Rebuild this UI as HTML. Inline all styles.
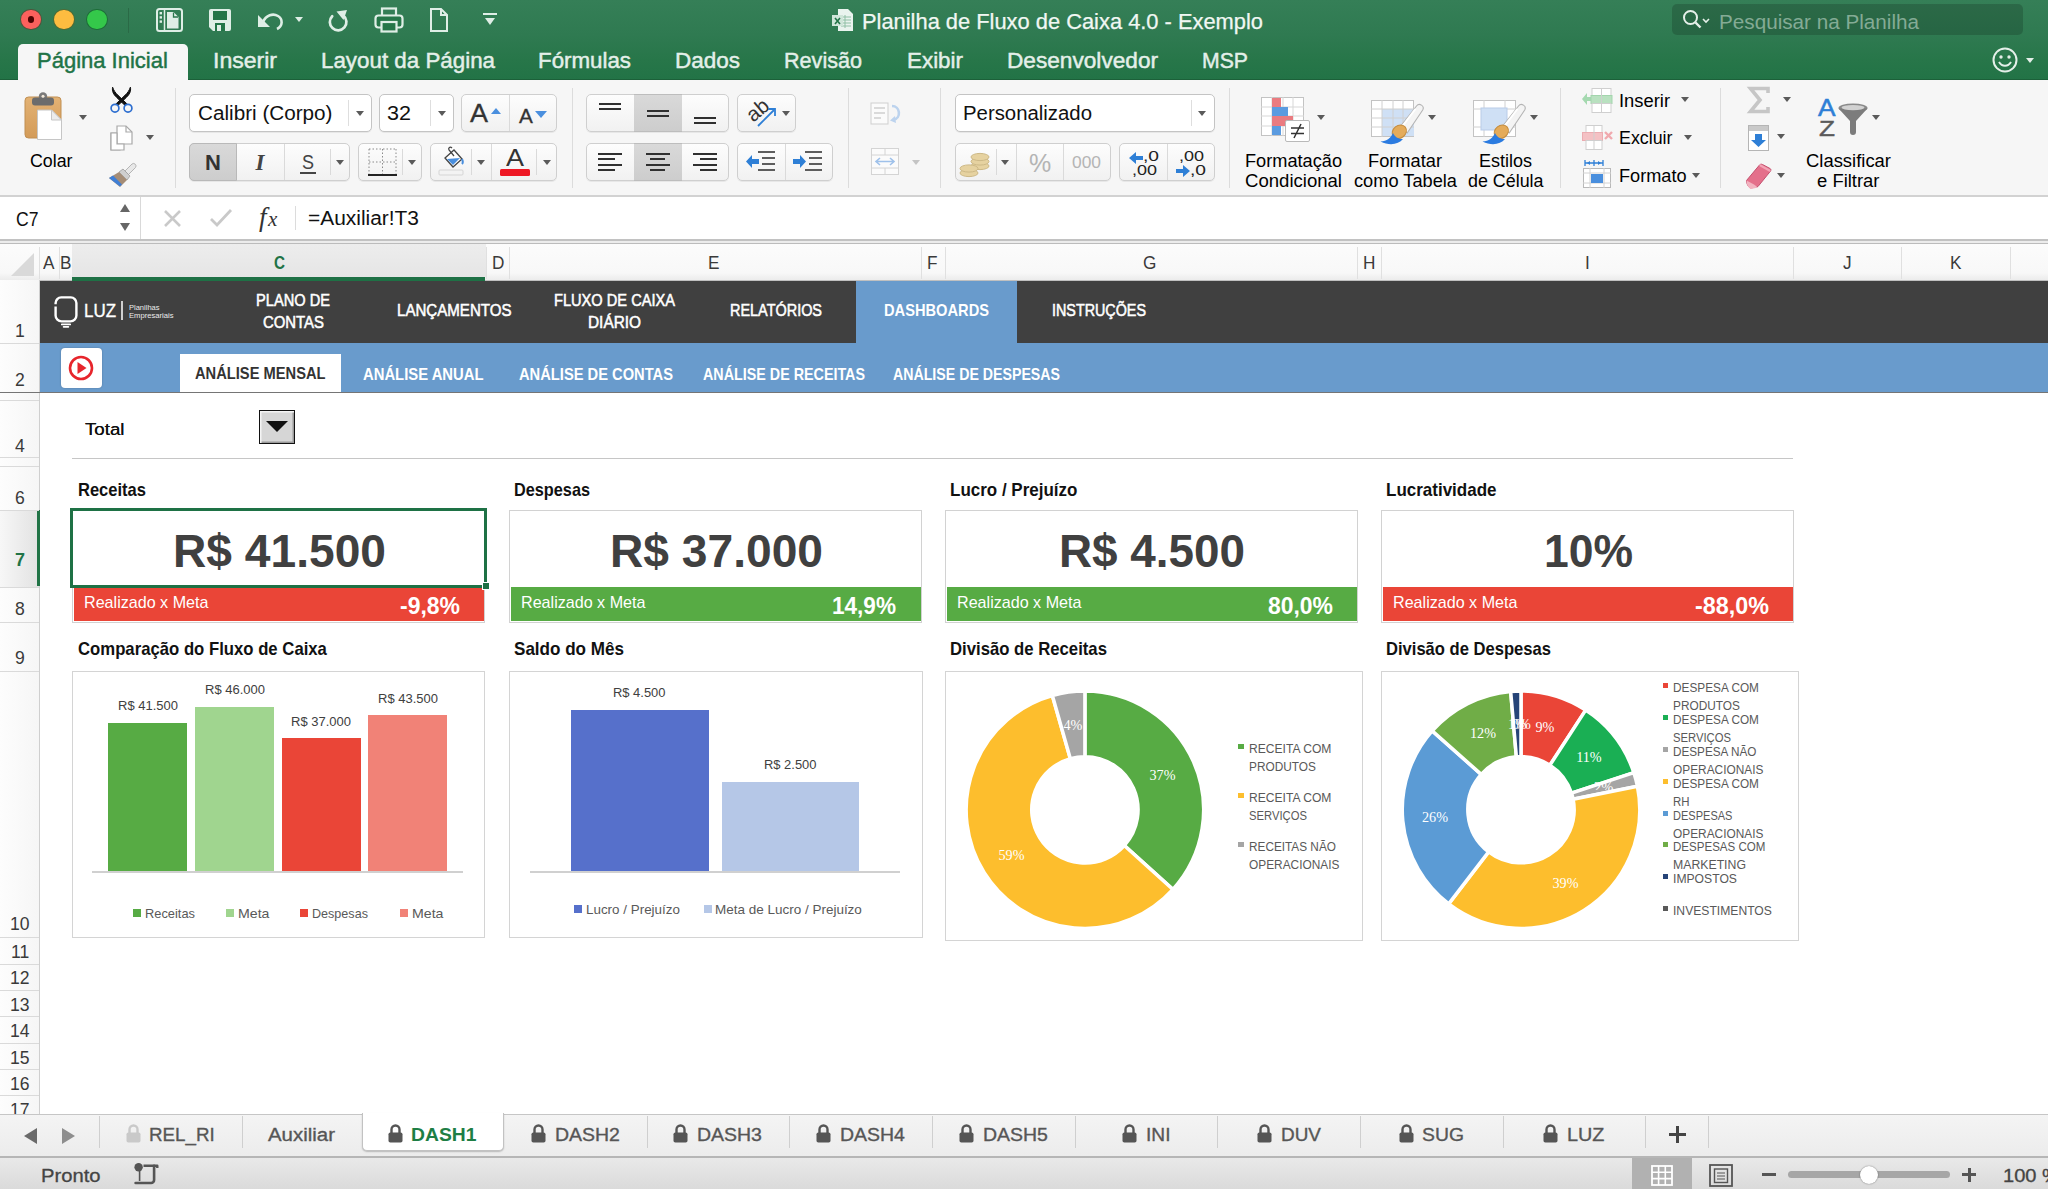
<!DOCTYPE html>
<html><head><meta charset="utf-8"><title>Planilha de Fluxo de Caixa 4.0 - Exemplo</title>
<style>
html,body{margin:0;padding:0;}
body{width:2048px;height:1189px;position:relative;overflow:hidden;background:#fff;font-family:"Liberation Sans",sans-serif;}
.a{position:absolute;box-sizing:border-box;}
.t{position:absolute;white-space:nowrap;transform-origin:0 50%;}
svg{position:absolute;overflow:visible;}
.btn{position:absolute;box-sizing:border-box;background:linear-gradient(#fdfdfd,#f1f1f1);border:1px solid #cfcfcf;border-radius:5px;box-shadow:0 1px 0 rgba(0,0,0,.06);}
.sel{position:absolute;box-sizing:border-box;background:linear-gradient(#d9d9d9,#cdcdcd);}
.vd{position:absolute;width:1px;background:#d8d8d8;}
.sep{position:absolute;width:1px;background:#dcdcdc;top:88px;height:100px;}
</style></head><body>

<div class="a" style="left:0px;top:0px;width:2048px;height:80px;background:linear-gradient(#357f57 0px,#2f7a51 35px,#277649 60px,#227346 80px);"></div>
<div class="a" style="left:0px;top:79px;width:2048px;height:1px;background:#1c6039;"></div>
<div class="a" style="left:20.4px;top:9px;width:21.2px;height:21.2px;border-radius:50%;background:#fc615d;border:1px solid rgba(20,80,50,.75);"></div>
<div class="a" style="left:53.4px;top:9px;width:21.2px;height:21.2px;border-radius:50%;background:#fdbc40;border:1px solid rgba(20,80,50,.75);"></div>
<div class="a" style="left:86.4px;top:9px;width:21.2px;height:21.2px;border-radius:50%;background:#34c84a;border:1px solid rgba(20,80,50,.75);"></div>
<div class="a" style="left:27.8px;top:16.4px;width:6.4px;height:6.4px;border-radius:50%;background:#4f0403;"></div>
<div class="a" style="left:128px;top:8px;width:1px;height:25px;background:#2a6a46;"></div>
<svg class="a" style="left:156px;top:8px" width="27" height="24" viewBox="0 0 27 24"><rect x="1" y="1" width="25" height="22" rx="2.5" fill="none" stroke="#dfeee6" stroke-width="2"/><path d="M8.5 1v22" stroke="#dfeee6" stroke-width="1.5"/><rect x="3.6" y="4" width="2.4" height="2.4" fill="#dfeee6"/><rect x="3.6" y="8.2" width="2.4" height="2.4" fill="#dfeee6"/><rect x="3.6" y="12.4" width="2.4" height="2.4" fill="#dfeee6"/><path d="M11 4h6.5l5 5v11.5h-11.5z" fill="#dfeee6"/><path d="M17.5 4.5v4.5h4.5" fill="none" stroke="#2b774d" stroke-width="1.3"/></svg>
<svg class="a" style="left:208px;top:8px" width="24" height="24" viewBox="0 0 24 24"><path d="M1 3a2 2 0 0 1 2-2h18a2 2 0 0 1 2 2v18a2 2 0 0 1-2 2h-16l-4-4z" fill="#dfeee6"/><rect x="5" y="3" width="14" height="9" fill="#247548"/><rect x="7" y="15" width="10" height="8" fill="#247548"/><rect x="9" y="17" width="4" height="6" fill="#dfeee6"/></svg>
<svg class="a" style="left:256px;top:9px" width="28" height="22" viewBox="0 0 28 22"><path d="M2 6v12h12z" fill="#dfeee6"/><path d="M7 13c3-7 10-9 15-6s5 10-1 13" fill="none" stroke="#dfeee6" stroke-width="2.6"/></svg>
<div class="a" style="left:294.7px;top:17.4px;width:0;height:0;border-left:4.3px solid transparent;border-right:4.3px solid transparent;border-top:5.6px solid #dfeee6;"></div>
<svg class="a" style="left:326px;top:8px" width="24" height="24" viewBox="0 0 24 24"><path d="M6.2 8.2a8.3 8.3 0 1 0 11.2 -0.6" fill="none" stroke="#dfeee6" stroke-width="2.7" stroke-linecap="round"/><path d="M10.5 3.5l10.5-1.5-3.5 10z" fill="#dfeee6"/></svg>
<svg class="a" style="left:374px;top:7px" width="30" height="26" viewBox="0 0 30 26"><rect x="8" y="1.5" width="14" height="7.5" fill="none" stroke="#dfeee6" stroke-width="2.2"/><rect x="1.5" y="8.5" width="27" height="12" rx="3" fill="#267649" stroke="#dfeee6" stroke-width="2.2"/><rect x="7.5" y="15" width="15" height="9.5" fill="#267649" stroke="#dfeee6" stroke-width="2.2"/></svg>
<svg class="a" style="left:429px;top:8px" width="20" height="24" viewBox="0 0 20 24"><path d="M2 1h10l6 6v16h-16z" fill="none" stroke="#dfeee6" stroke-width="2"/><path d="M12 1v6h6" fill="none" stroke="#dfeee6" stroke-width="2"/></svg>
<div class="a" style="left:483px;top:13px;width:14px;height:2.2px;background:#dfeee6;"></div>
<div class="a" style="left:484.5px;top:18.2px;width:0;height:0;border-left:5.5px solid transparent;border-right:5.5px solid transparent;border-top:7.2px solid #dfeee6;"></div>
<svg class="a" style="left:832px;top:8px" width="22" height="24" viewBox="0 0 22 24"><path d="M6 1h10l5 5v17h-15z" fill="#e9f3ee"/><g stroke="#8fbfa5" stroke-width="1"><path d="M9 9h10M9 12h10M9 15h10M9 18h10M13 7v13"/></g><rect x="0" y="7" width="11" height="11" fill="#cfe5d9"/><path d="M3 10l5 6M8 10l-5 6" stroke="#217346" stroke-width="1.6"/></svg>
<span class="t" style="left:862.0px;top:8.5px;font-size:21.5px;line-height:26px;color:#f1f7f3;transform:scaleX(1.0168);-webkit-text-stroke:.25px #f1f7f3;">Planilha de Fluxo de Caixa 4.0 - Exemplo</span>
<div class="a" style="left:1672px;top:4px;width:351px;height:31px;background:rgba(0,0,0,.17);border-radius:5px;"></div>
<svg class="a" style="left:1682px;top:9px" width="30" height="22" viewBox="0 0 30 22"><circle cx="8.5" cy="8.5" r="6.5" fill="none" stroke="#e6f0ea" stroke-width="2"/><path d="M13.5 13.5l5 5" stroke="#e6f0ea" stroke-width="2.4"/><path d="M21 10l3 3 3-3" fill="none" stroke="#e6f0ea" stroke-width="1.6"/></svg>
<span class="t" style="left:1719.0px;top:8.5px;font-size:20.5px;line-height:25px;color:#84ab95;transform:scaleX(1.0086);">Pesquisar na Planilha</span>
<div class="a" style="left:18px;top:44px;width:170px;height:38px;background:#f6f6f6;border-radius:5px 5px 0 0;"></div>
<span class="t" style="left:37.0px;top:48.0px;font-size:22px;line-height:26px;color:#217346;-webkit-text-stroke:.45px #217346;">Página Inicial</span>
<span class="t" style="left:213.0px;top:48.0px;font-size:22px;line-height:26px;color:#e4efe9;transform:scaleX(1.0471);-webkit-text-stroke:.45px #e4efe9;">Inserir</span>
<span class="t" style="left:321.0px;top:48.0px;font-size:22px;line-height:26px;color:#e4efe9;transform:scaleX(1.0160);-webkit-text-stroke:.45px #e4efe9;">Layout da Página</span>
<span class="t" style="left:538.0px;top:48.0px;font-size:22px;line-height:26px;color:#e4efe9;transform:scaleX(1.0143);-webkit-text-stroke:.45px #e4efe9;">Fórmulas</span>
<span class="t" style="left:675.0px;top:48.0px;font-size:22px;line-height:26px;color:#e4efe9;transform:scaleX(1.0221);-webkit-text-stroke:.45px #e4efe9;">Dados</span>
<span class="t" style="left:784.0px;top:48.0px;font-size:22px;line-height:26px;color:#e4efe9;transform:scaleX(0.9814);-webkit-text-stroke:.45px #e4efe9;">Revisão</span>
<span class="t" style="left:907.0px;top:48.0px;font-size:22px;line-height:26px;color:#e4efe9;transform:scaleX(1.0180);-webkit-text-stroke:.45px #e4efe9;">Exibir</span>
<span class="t" style="left:1007.0px;top:48.0px;font-size:22px;line-height:26px;color:#e4efe9;transform:scaleX(1.0290);-webkit-text-stroke:.45px #e4efe9;">Desenvolvedor</span>
<span class="t" style="left:1202.0px;top:48.0px;font-size:22px;line-height:26px;color:#e4efe9;transform:scaleX(0.9649);-webkit-text-stroke:.45px #e4efe9;">MSP</span>
<svg class="a" style="left:1992px;top:47px" width="26" height="26" viewBox="0 0 26 26"><circle cx="13" cy="13" r="11.5" fill="none" stroke="#e4efe9" stroke-width="2"/><circle cx="9" cy="10" r="1.7" fill="#e4efe9"/><circle cx="17" cy="10" r="1.7" fill="#e4efe9"/><path d="M7 15c3 5 9 5 12 0" fill="none" stroke="#e4efe9" stroke-width="2"/></svg>
<div class="a" style="left:2025.5px;top:58.3px;width:0;height:0;border-left:4.5px solid transparent;border-right:4.5px solid transparent;border-top:5.9px solid #e4efe9;"></div>
<div class="a" style="left:0px;top:80px;width:2048px;height:116px;background:#f6f6f6;"></div>
<div class="a" style="left:0px;top:195px;width:2048px;height:2px;background:#d2d2d2;"></div>
<div class="sep" style="left:175px"></div>
<div class="sep" style="left:572px"></div>
<div class="sep" style="left:848px"></div>
<div class="sep" style="left:940px"></div>
<div class="sep" style="left:1229px"></div>
<div class="sep" style="left:1560px"></div>
<div class="sep" style="left:1720px"></div>
<svg class="a" style="left:24px;top:91px" width="42" height="50" viewBox="0 0 42 50"><defs><linearGradient id="cb" x1="0" y1="0" x2="0" y2="1"><stop offset="0" stop-color="#e3b274"/><stop offset="1" stop-color="#d39b58"/></linearGradient></defs>
<rect x="1" y="6" width="36" height="41" rx="3.5" fill="url(#cb)" stroke="#c08f52" stroke-width="1"/>
<circle cx="19" cy="5.5" r="4.2" fill="#7a7a7a"/><rect x="8" y="6.5" width="22" height="8" rx="3" fill="#6c6c6c"/><circle cx="19" cy="5.2" r="1.5" fill="#f3e9da"/>
<path d="M13.5 19h14l10 10v19.5h-24z" fill="#fff" stroke="#c6c6c6" stroke-width="1"/><path d="M27.5 19v10h10z" fill="#ececec" stroke="#c6c6c6" stroke-width="1"/></svg>
<div class="a" style="left:78.5px;top:114.8px;width:0;height:0;border-left:4.5px solid transparent;border-right:4.5px solid transparent;border-top:5.9px solid #5a5a5a;"></div>
<span class="t" style="left:30.0px;top:151.0px;font-size:17.5px;line-height:21px;color:#000;transform:scaleX(1.0163);">Colar</span>
<svg class="a" style="left:109px;top:86px" width="25" height="28" viewBox="0 0 25 28"><path d="M3.6 1.2c1.2 3.4 2.8 5.6 5.400 8.100l8.800 8.400-1.700 1.800-8.300-7.900c-3.400-3.300-5-6.300-4.200-10.400z" fill="#111" stroke="#111" stroke-width="1" stroke-linejoin="round"/><path d="M21.400 1.200c-1.200 3.400-2.800 5.600-5.400 8.100l-8.800 8.400 1.700 1.800 8.300-7.900c3.400-3.300 5-6.300 4.200-10.400z" fill="#111" stroke="#111" stroke-width="1" stroke-linejoin="round"/>
<circle cx="6" cy="22.200" r="3.900" fill="#f6f6f6" stroke="#2e6fd0" stroke-width="1.700"/><circle cx="19" cy="22.200" r="3.900" fill="#f6f6f6" stroke="#2e6fd0" stroke-width="1.700"/></svg>
<svg class="a" style="left:110px;top:125px" width="24" height="26" viewBox="0 0 24 26"><path d="M1 8h9v17h-9z M1 8" fill="#fff" stroke="#a9a9a9" stroke-width="1.2"/><path d="M7 1h9l6 6v12h-15z" fill="#fff" stroke="#a9a9a9" stroke-width="1.2"/><path d="M16 1v6h6" fill="none" stroke="#a9a9a9" stroke-width="1.2"/><path d="M1 8h6v11h7v6h-13z" fill="#fff" stroke="#a9a9a9" stroke-width="1.2"/></svg>
<div class="a" style="left:145.5px;top:134.8px;width:0;height:0;border-left:4.5px solid transparent;border-right:4.5px solid transparent;border-top:5.9px solid #5a5a5a;"></div>
<svg class="a" style="left:108px;top:163px" width="28" height="25" viewBox="0 0 28 25"><path d="M17 8l7-7a2.5 2.5 0 0 1 3.5 3.5l-7 7z" fill="#e8e8e8" stroke="#b5b5b5" stroke-width="1"/><path d="M11 9l4-3 7 7-3 4z" fill="#cfcfcf" stroke="#9d9d9d" stroke-width=".8"/>
<path d="M1 15l10-6 8 8-7 7z" fill="#a58d76"/><path d="M1 15l4-2.4 9 9-2 2z" fill="#3f7fd6"/></svg>
<div class="btn" style="left:189px;top:94px;width:183px;height:38px;background:#fff;border-color:#c4c4c4;"></div>
<div class="a" style="left:348px;top:100px;width:1px;height:26px;background:#dedede;"></div>
<span class="t" style="left:197.5px;top:101.5px;font-size:19.5px;line-height:23px;color:#111;transform:scaleX(1.0609);">Calibri (Corpo)</span>
<div class="a" style="left:355.5px;top:110.8px;width:0;height:0;border-left:4.5px solid transparent;border-right:4.5px solid transparent;border-top:5.9px solid #5a5a5a;"></div>
<div class="btn" style="left:379px;top:94px;width:75px;height:38px;background:#fff;border-color:#c4c4c4;"></div>
<div class="a" style="left:430px;top:100px;width:1px;height:26px;background:#dedede;"></div>
<span class="t" style="left:387.0px;top:101.5px;font-size:19.5px;line-height:23px;color:#111;transform:scaleX(1.1065);">32</span>
<div class="a" style="left:437.5px;top:110.8px;width:0;height:0;border-left:4.5px solid transparent;border-right:4.5px solid transparent;border-top:5.9px solid #5a5a5a;"></div>
<div class="btn" style="left:461px;top:94px;width:96px;height:38px;"></div>
<div class="a" style="left:509px;top:95px;width:1px;height:36px;background:#dadada;"></div>
<span class="t" style="left:470.0px;top:98.0px;font-size:25.5px;line-height:31px;color:#333;transform:scaleX(1.0583);-webkit-text-stroke:.3px #333;">A</span>
<div class="a" style="left:490.5px;top:108px;border-left:5.800px solid transparent;border-right:5.800px solid transparent;border-bottom:6.500px solid #4a8fde;"></div>
<span class="t" style="left:519.0px;top:103.0px;font-size:20.5px;line-height:25px;color:#333;transform:scaleX(1.0093);-webkit-text-stroke:.3px #333;">A</span>
<div class="a" style="left:535px;top:111px;border-left:6px solid transparent;border-right:6px solid transparent;border-top:7px solid #4a8fde;"></div>
<div class="btn" style="left:189px;top:143px;width:161px;height:38px;"></div>
<div class="sel" style="left:189px;top:143px;width:48px;height:38px;border-radius:5px 0 0 5px;border:1px solid #b9b9b9;"></div>
<div class="a" style="left:284px;top:144px;width:1px;height:36px;background:#dadada;"></div>
<div class="a" style="left:330px;top:149px;width:1px;height:26px;background:#dadada;"></div>
<span class="t" style="left:205.1px;top:149.5px;font-size:22px;line-height:26px;color:#333;font-weight:bold;">N</span>
<span class="t" style="left:255.5px;top:148.5px;font-size:23px;line-height:28px;color:#444;font-family:'Liberation Serif',serif;font-weight:bold;font-style:italic;">I</span>
<span class="t" style="left:302.0px;top:149.5px;font-size:20px;line-height:24px;color:#444;transform:scaleX(0.8996);">S</span>
<div class="a" style="left:300px;top:172px;width:16px;height:1.5px;background:#444;"></div>
<div class="a" style="left:335.5px;top:159.8px;width:0;height:0;border-left:4.5px solid transparent;border-right:4.5px solid transparent;border-top:5.9px solid #5a5a5a;"></div>
<div class="btn" style="left:358px;top:143px;width:64px;height:38px;"></div>
<svg class="a" style="left:368px;top:148px" width="28" height="28" viewBox="0 0 28 28"><path d="M1 1h27M1 1v26M28 1v26M14.5 1v26M1 14h27" stroke="#8a8a8a" stroke-width="1" stroke-dasharray="1.5 2" fill="none"/><path d="M0 27h29" stroke="#222" stroke-width="2"/></svg>
<div class="a" style="left:402px;top:149px;width:1px;height:26px;background:#dadada;"></div>
<div class="a" style="left:407.5px;top:159.8px;width:0;height:0;border-left:4.5px solid transparent;border-right:4.5px solid transparent;border-top:5.9px solid #5a5a5a;"></div>
<div class="btn" style="left:430px;top:143px;width:127px;height:38px;"></div>
<svg class="a" style="left:438px;top:146px" width="26" height="30" viewBox="0 0 26 30"><path d="M7 12l9-8 8 9-9 8z" fill="#fff" stroke="#444" stroke-width="1.3"/><path d="M9 13l13-1-7 7z" fill="#4a8fde"/><path d="M14 2c-2-2-4 0-3 2l5 6" fill="none" stroke="#444" stroke-width="1.3"/><path d="M24 13c1 2 1 4 0 5" stroke="#4a8fde" stroke-width="2" fill="none"/><rect x="1" y="24" width="24" height="5" rx="1" fill="#f3f3f3" stroke="#d5d5d5" stroke-width="1"/></svg>
<div class="a" style="left:471px;top:149px;width:1px;height:26px;background:#dadada;"></div>
<div class="a" style="left:476.5px;top:159.8px;width:0;height:0;border-left:4.5px solid transparent;border-right:4.5px solid transparent;border-top:5.9px solid #5a5a5a;"></div>
<div class="a" style="left:491px;top:144px;width:1px;height:36px;background:#dadada;"></div>
<span class="t" style="left:506.0px;top:143.5px;font-size:23px;line-height:28px;color:#333;transform:scaleX(1.1733);">A</span>
<div class="a" style="left:500px;top:169px;width:30px;height:7.3px;background:#ee1825;border-radius:1.5px;"></div>
<div class="a" style="left:536px;top:149px;width:1px;height:26px;background:#dadada;"></div>
<div class="a" style="left:542.5px;top:159.8px;width:0;height:0;border-left:4.5px solid transparent;border-right:4.5px solid transparent;border-top:5.9px solid #5a5a5a;"></div>
<div class="btn" style="left:586px;top:94px;width:143px;height:38px;"></div>
<div class="sel" style="left:634px;top:94px;width:48px;height:38px;border-top:1px solid #bdbdbd;border-bottom:1px solid #bdbdbd;"></div>
<div class="a" style="left:599px;top:103px;width:22px;height:1.5px;background:#303030;"></div><div class="a" style="left:599px;top:108px;width:22px;height:1.5px;background:#303030;"></div>
<div class="a" style="left:647px;top:110px;width:22px;height:1.5px;background:#303030;"></div><div class="a" style="left:647px;top:115px;width:22px;height:1.5px;background:#303030;"></div>
<div class="a" style="left:694px;top:117px;width:22px;height:1.5px;background:#303030;"></div><div class="a" style="left:694px;top:122px;width:22px;height:1.5px;background:#303030;"></div>
<div class="btn" style="left:737px;top:94px;width:59px;height:38px;"></div>
<span class="t" style="left:746px;top:99px;font-size:20.5px;line-height:22px;color:#333;transform:rotate(-40deg);transform-origin:50% 50%;">ab</span>
<svg class="a" style="left:756px;top:105.5px" width="24" height="22" viewBox="0 0 24 22"><path d="M2 20l16-16" stroke="#2e7fd6" stroke-width="1.8"/><path d="M12 3h7v7" fill="none" stroke="#2e7fd6" stroke-width="1.8"/></svg>
<div class="a" style="left:781.5px;top:110.8px;width:0;height:0;border-left:4.5px solid transparent;border-right:4.5px solid transparent;border-top:5.9px solid #5a5a5a;"></div>
<div class="btn" style="left:586px;top:143px;width:143px;height:38px;"></div>
<div class="sel" style="left:634px;top:143px;width:48px;height:38px;border-top:1px solid #bdbdbd;border-bottom:1px solid #bdbdbd;"></div>
<div class="a" style="left:598px;top:153px;width:24px;height:1.5px;background:#303030;"></div><div class="a" style="left:598px;top:158px;width:17px;height:1.5px;background:#303030;"></div><div class="a" style="left:598px;top:164px;width:24px;height:1.5px;background:#303030;"></div><div class="a" style="left:598px;top:169px;width:17px;height:1.5px;background:#303030;"></div>
<div class="a" style="left:646px;top:153px;width:24px;height:1.5px;background:#303030;"></div><div class="a" style="left:650px;top:158px;width:15px;height:1.5px;background:#303030;"></div><div class="a" style="left:646px;top:164px;width:24px;height:1.5px;background:#303030;"></div><div class="a" style="left:650px;top:169px;width:15px;height:1.5px;background:#303030;"></div>
<div class="a" style="left:693px;top:153px;width:24px;height:1.5px;background:#303030;"></div><div class="a" style="left:700px;top:158px;width:17px;height:1.5px;background:#303030;"></div><div class="a" style="left:693px;top:164px;width:24px;height:1.5px;background:#303030;"></div><div class="a" style="left:700px;top:169px;width:17px;height:1.5px;background:#303030;"></div>
<div class="btn" style="left:737px;top:143px;width:96px;height:38px;"></div>
<div class="a" style="left:785px;top:144px;width:1px;height:36px;background:#dadada;"></div>
<svg class="a" style="left:746px;top:150px" width="30" height="24" viewBox="0 0 30 24"><path d="M13 9h-7v-4l-6 6.5 6 6.5v-4h7z" fill="#2e7fd6"/><path d="M12 2h17M16 8h13M16 14h13M12 20h17" stroke="#2b2b2b" stroke-width="1.6"/></svg>
<svg class="a" style="left:793px;top:150px" width="30" height="24" viewBox="0 0 30 24"><path d="M0 9h7v-4l6 6.5-6 6.5v-4h-7z" fill="#2e7fd6"/><path d="M12 2h17M16 8h13M16 14h13M12 20h17" stroke="#2b2b2b" stroke-width="1.6"/></svg>
<svg class="a" style="left:870px;top:102px" width="34" height="24" viewBox="0 0 34 24"><rect x="1" y="1" width="17" height="21" fill="#fbfbfb" stroke="#cfcfcf"/><path d="M4 6h11M4 11h11M4 16h7" stroke="#cfcfcf" stroke-width="1.4"/><path d="M22 4c8 0 10 12 1 14" fill="none" stroke="#bcd3ee" stroke-width="2.6"/><path d="M25 14l-5 4.5 6 2.5z" fill="#bcd3ee"/></svg>
<svg class="a" style="left:871px;top:148px" width="28" height="27" viewBox="0 0 28 27"><rect x=".5" y=".5" width="27" height="26" fill="#fbfbfb" stroke="#d4d4d4"/><path d="M0 7h28M0 20h28M14 0v7M14 20v7" stroke="#d4d4d4"/><path d="M6 13.5h16M9 10l-4 3.5 4 3.5M19 10l4 3.5-4 3.5" fill="none" stroke="#9fc1ea" stroke-width="1.6"/></svg>
<div class="a" style="left:911.5px;top:159.8px;width:0;height:0;border-left:4.5px solid transparent;border-right:4.5px solid transparent;border-top:5.9px solid #c4c4c4;"></div>
<div class="btn" style="left:955px;top:94px;width:260px;height:38px;background:#fff;border-color:#c4c4c4;"></div>
<div class="a" style="left:1191px;top:100px;width:1px;height:26px;background:#dedede;"></div>
<span class="t" style="left:963.0px;top:101.5px;font-size:19.5px;line-height:23px;color:#111;transform:scaleX(1.0439);">Personalizado</span>
<div class="a" style="left:1198.0px;top:110.8px;width:0;height:0;border-left:4.5px solid transparent;border-right:4.5px solid transparent;border-top:5.9px solid #5a5a5a;"></div>
<div class="btn" style="left:955px;top:143px;width:156px;height:38px;"></div>
<svg class="a" style="left:959px;top:150px" width="32" height="28" viewBox="0 0 32 28"><g fill="#e6d2a0" stroke="#cdb987" stroke-width="1"><ellipse cx="21" cy="16" rx="9" ry="3.6"/><ellipse cx="21" cy="11.5" rx="9" ry="3.6"/><ellipse cx="21" cy="7" rx="9" ry="3.6"/><ellipse cx="10" cy="23" rx="9" ry="3.6"/><ellipse cx="10" cy="18.5" rx="9" ry="3.6"/></g></svg>
<div class="a" style="left:996px;top:149px;width:1px;height:26px;background:#dadada;"></div>
<div class="a" style="left:1001.0px;top:159.8px;width:0;height:0;border-left:4.5px solid transparent;border-right:4.5px solid transparent;border-top:5.9px solid #5a5a5a;"></div>
<div class="a" style="left:1016px;top:144px;width:1px;height:36px;background:#dadada;"></div>
<div class="a" style="left:1063px;top:144px;width:1px;height:36px;background:#dadada;"></div>
<span class="t" style="left:1028.9px;top:147.5px;font-size:25px;line-height:30px;color:#b4b4b4;">%</span>
<span class="t" style="left:1071.5px;top:153.0px;font-size:16px;line-height:19px;color:#b4b4b4;transform:scaleX(1.0863);">000</span>
<div class="btn" style="left:1119px;top:143px;width:96px;height:38px;"></div>
<div class="a" style="left:1167px;top:144px;width:1px;height:36px;background:#dadada;"></div>
<svg class="a" style="left:1129px;top:152px" width="14" height="12" viewBox="0 0 14 12"><path d="M14 4h-7v-4l-7 6 7 6v-4h7z" fill="#2e7fd6"/></svg>
<span class="t" style="left:1143.0px;top:147.5px;font-size:14.5px;line-height:17px;color:#222;transform:scaleX(1.3231);">,0</span>
<span class="t" style="left:1132.0px;top:161.5px;font-size:14.5px;line-height:17px;color:#222;transform:scaleX(1.2403);">,00</span>
<span class="t" style="left:1179.0px;top:147.5px;font-size:14.5px;line-height:17px;color:#222;transform:scaleX(1.2403);">,00</span>
<span class="t" style="left:1190.0px;top:161.5px;font-size:14.5px;line-height:17px;color:#222;transform:scaleX(1.3231);">,0</span>
<svg class="a" style="left:1176px;top:165px" width="14" height="12" viewBox="0 0 14 12"><path d="M0 4h7v-4l7 6-7 6v-4h-7z" fill="#2e7fd6"/></svg>
<svg class="a" style="left:1261px;top:97px" width="50" height="46" viewBox="0 0 50 46"><rect x=".5" y=".5" width="42" height="38" fill="#fff" stroke="#c3c3c3"/><path d="M11 0v39M22 0v39M32 0v39M0 10h43M0 19h43M0 29h43" stroke="#d7d7d7"/>
<rect x="11" y="1" width="9" height="9" fill="#ea7b80"/><rect x="11" y="10" width="16" height="9" fill="#5b9be0"/><rect x="11" y="19" width="21" height="10" fill="#ea7b80"/><rect x="11" y="29" width="9" height="9" fill="#5b9be0"/>
<rect x="24.5" y="23.5" width="24" height="21" rx="1.5" fill="#fff" stroke="#b9b9b9"/><path d="M30 31h13M30 36.5h13M40 27l-7 14" stroke="#333" stroke-width="1.5"/></svg>
<div class="a" style="left:1316.5px;top:114.8px;width:0;height:0;border-left:4.5px solid transparent;border-right:4.5px solid transparent;border-top:5.9px solid #5a5a5a;"></div>
<span class="t" style="left:1245.0px;top:151.0px;font-size:17.5px;line-height:21px;color:#000;transform:scaleX(1.0389);">Formatação</span>
<span class="t" style="left:1245.0px;top:170.5px;font-size:17.5px;line-height:21px;color:#000;transform:scaleX(1.0607);">Condicional</span>
<svg class="a" style="left:1371px;top:100px" width="54" height="46" viewBox="0 0 54 46"><rect x=".5" y=".5" width="42" height="36" fill="#fff" stroke="#c3c3c3"/><rect x="11" y="9" width="32" height="27" fill="#cfe0f5"/><path d="M11 0v37M22 0v37M32 0v37M0 9h43M0 18h43M0 27h43" stroke="#d0d0d0"/><path d="M28.500 27.500l17-21.500a3.700 3.700 0 0 1 6.200 4l-15.500 23z" fill="#f4f4f4" stroke="#b4b4b4" stroke-width="1.100"/><path d="M44 9.500l-12 16" stroke="#fff" stroke-width="2" stroke-linecap="round"/><ellipse cx="28.300" cy="31.800" rx="7.600" ry="6.300" transform="rotate(-38 28.300 31.800)" fill="#e4ab5a" stroke="#c48c3e" stroke-width="1"/><path d="M9.500 41.500c6.500-.5 10.500-3.500 12.500-8.500 1.800 4 5.600 6.400 10 6-4.500 5.500-13.500 7-22.500 2.500z" fill="#2b7be0"/></svg>
<svg class="a" style="left:1473px;top:100px" width="54" height="46" viewBox="0 0 54 46"><rect x=".5" y=".5" width="42" height="36" fill="#fff" stroke="#c3c3c3"/><path d="M11 0v37M32 0v37M0 9h43M0 27h43" stroke="#d0d0d0"/><rect x="8" y="8" width="26" height="22" fill="#cfe0f5" stroke="#b9cce8"/><path d="M28.500 27.500l17-21.500a3.700 3.700 0 0 1 6.200 4l-15.500 23z" fill="#f4f4f4" stroke="#b4b4b4" stroke-width="1.100"/><path d="M44 9.500l-12 16" stroke="#fff" stroke-width="2" stroke-linecap="round"/><ellipse cx="28.300" cy="31.800" rx="7.600" ry="6.300" transform="rotate(-38 28.300 31.800)" fill="#e4ab5a" stroke="#c48c3e" stroke-width="1"/><path d="M9.500 41.500c6.500-.5 10.500-3.500 12.500-8.500 1.800 4 5.600 6.400 10 6-4.500 5.500-13.500 7-22.500 2.500z" fill="#2b7be0"/></svg>
<div class="a" style="left:1428.0px;top:114.8px;width:0;height:0;border-left:4.5px solid transparent;border-right:4.5px solid transparent;border-top:5.9px solid #5a5a5a;"></div>
<div class="a" style="left:1529.5px;top:114.8px;width:0;height:0;border-left:4.5px solid transparent;border-right:4.5px solid transparent;border-top:5.9px solid #5a5a5a;"></div>
<span class="t" style="left:1367.5px;top:151.0px;font-size:17.5px;line-height:21px;color:#000;transform:scaleX(1.0425);">Formatar</span>
<span class="t" style="left:1353.5px;top:170.5px;font-size:17.5px;line-height:21px;color:#000;transform:scaleX(1.0414);">como Tabela</span>
<span class="t" style="left:1479.0px;top:151.0px;font-size:17.5px;line-height:21px;color:#000;transform:scaleX(1.0283);">Estilos</span>
<span class="t" style="left:1468.2px;top:170.5px;font-size:17.5px;line-height:21px;color:#000;transform:scaleX(1.0211);">de Célula</span>
<svg class="a" style="left:1582px;top:88px" width="30" height="25" viewBox="0 0 30 25"><path d="M10 9h-5v-4l-5 6 5 6v-4h5z" fill="#a5d9b0"/><rect x="10" y="0.5" width="19" height="7" fill="#fff" stroke="#cfcfcf"/><rect x="9" y="7.500" width="21" height="8" fill="#b9e1c0" stroke="#a3d5ad"/><rect x="10" y="15.5" width="19" height="9" fill="#fff" stroke="#cfcfcf"/><path d="M19.5 0v25" stroke="#cfcfcf"/></svg>
<span class="t" style="left:1619.0px;top:90.8px;font-size:17.5px;line-height:21px;color:#000;transform:scaleX(1.0489);">Inserir</span>
<div class="a" style="left:1680.5px;top:97.3px;width:0;height:0;border-left:4.5px solid transparent;border-right:4.5px solid transparent;border-top:5.9px solid #5a5a5a;"></div>
<svg class="a" style="left:1582px;top:125px" width="32" height="26" viewBox="0 0 32 26"><rect x="4" y="0.5" width="16" height="7" fill="#fff" stroke="#cfcfcf"/><rect x="0.500" y="7.500" width="20" height="8" fill="#f4c1c4" stroke="#ecacb1"/><rect x="4" y="15.5" width="16" height="9" fill="#fff" stroke="#cfcfcf"/><path d="M12 0v25" stroke="#cfcfcf"/><path d="M23 7l7 7M30 7l-7 7" stroke="#f0a9ae" stroke-width="2.400"/></svg>
<span class="t" style="left:1619.0px;top:128.3px;font-size:17.5px;line-height:21px;color:#000;transform:scaleX(1.0189);">Excluir</span>
<div class="a" style="left:1683.5px;top:134.8px;width:0;height:0;border-left:4.5px solid transparent;border-right:4.5px solid transparent;border-top:5.9px solid #5a5a5a;"></div>
<svg class="a" style="left:1583px;top:160px" width="29" height="28" viewBox="0 0 29 28"><path d="M2 3h18M2 0v6M20 0v6M11 0v6" stroke="#2e7fd6" stroke-width="1.3"/><path d="M4 3l3-2v4zM18 3l-3-2v4z" fill="#2e7fd6"/><rect x=".5" y="8.5" width="27" height="19" fill="#fff" stroke="#b9b9b9"/><path d="M0 13h28M0 23h28M7 8v20M21 8v20" stroke="#d2d2d2"/><rect x="8" y="14" width="12" height="9" fill="#4a8fde"/></svg>
<span class="t" style="left:1619.0px;top:166.3px;font-size:17.5px;line-height:21px;color:#000;transform:scaleX(1.0360);">Formato</span>
<div class="a" style="left:1692.0px;top:172.8px;width:0;height:0;border-left:4.5px solid transparent;border-right:4.5px solid transparent;border-top:5.9px solid #5a5a5a;"></div>
<svg class="a" style="left:1748px;top:87px" width="22" height="26" viewBox="0 0 22 26"><path d="M20 6v-4.500h-17.500l9.500 11.500-9.500 11.500h17.500v-4.500" fill="none" stroke="#c6c6c6" stroke-width="3.600" stroke-linejoin="miter"/></svg>
<div class="a" style="left:1782.5px;top:96.8px;width:0;height:0;border-left:4.5px solid transparent;border-right:4.5px solid transparent;border-top:5.9px solid #5a5a5a;"></div>
<svg class="a" style="left:1748px;top:125px" width="21" height="26" viewBox="0 0 21 26"><rect x=".5" y=".5" width="20" height="25" fill="#fff" stroke="#b5b5b5"/><rect x="1" y="1" width="19" height="5" fill="#c9c9c9"/><path d="M7 9h7v6h4l-7.5 7-7.5-7h4z" fill="#2e7fd6"/></svg>
<div class="a" style="left:1776.5px;top:134.3px;width:0;height:0;border-left:4.5px solid transparent;border-right:4.5px solid transparent;border-top:5.9px solid #5a5a5a;"></div>
<svg class="a" style="left:1744px;top:162px" width="28" height="27" viewBox="0 0 28 27"><path d="M2.500 18.500l13-15.500c1-1 2-1 3-.500l7.500 4c1 .600 1.200 1.600.500 2.600l-12.500 15.400-7 1.500c-1 0-4.500-2.500-4.500-7.500z" fill="#e4708b" stroke="#c4506e" stroke-width="1"/><path d="M2.500 18.500l7.500 4 4 3-7 1.500c-2-.500-4.500-4-4.500-8.500z" fill="#f2b3c0"/><path d="M16.500 3.500l9 5" stroke="#f3a3b5" stroke-width="2.200" stroke-linecap="round"/></svg>
<div class="a" style="left:1776.5px;top:172.8px;width:0;height:0;border-left:4.5px solid transparent;border-right:4.5px solid transparent;border-top:5.9px solid #5a5a5a;"></div>
<span class="t" style="left:1817.5px;top:94.0px;font-size:23px;line-height:28px;color:#2e7fd6;transform:scaleX(1.1407);-webkit-text-stroke:.5px #2e7fd6;">A</span>
<span class="t" style="left:1818.5px;top:115.5px;font-size:22px;line-height:26px;color:#5a5a5a;transform:scaleX(1.1906);-webkit-text-stroke:.4px #5a5a5a;">Z</span>
<svg class="a" style="left:1838px;top:103px" width="30" height="31" viewBox="0 0 30 31"><ellipse cx="15" cy="5" rx="14.500" ry="4.500" fill="#8a8a8a"/><path d="M.600 5.500l11.400 12.500v11a3 3 0 0 0 6 0v-11l11.400-12.500z" fill="#7c7c7c"/><ellipse cx="15" cy="4.600" rx="11.500" ry="2.700" fill="#d2d2d2"/></svg>
<div class="a" style="left:1872.0px;top:114.8px;width:0;height:0;border-left:4.5px solid transparent;border-right:4.5px solid transparent;border-top:5.9px solid #5a5a5a;"></div>
<span class="t" style="left:1806.0px;top:151.0px;font-size:17.5px;line-height:21px;color:#000;transform:scaleX(1.0532);">Classificar</span>
<span class="t" style="left:1816.8px;top:170.5px;font-size:17.5px;line-height:21px;color:#000;transform:scaleX(1.0538);">e Filtrar</span>
<div class="a" style="left:0px;top:197px;width:2048px;height:43px;background:#fff;"></div>
<div class="a" style="left:0px;top:239px;width:2048px;height:2px;background:#c2c2c2;"></div>
<div class="a" style="left:0px;top:241px;width:2048px;height:2px;background:#ececec;"></div>
<div class="a" style="left:0px;top:243px;width:2048px;height:1px;background:#bcbcbc;"></div>
<div class="a" style="left:140px;top:197px;width:1px;height:42px;background:#d9d9d9;"></div>
<span class="t" style="left:16.0px;top:207.5px;font-size:19.5px;line-height:23px;color:#111;transform:scaleX(0.9026);">C7</span>
<div class="a" style="left:119.5px;top:204px;border-left:5.5px solid transparent;border-right:5.5px solid transparent;border-bottom:8px solid #666;"></div>
<div class="a" style="left:119.5px;top:223px;border-left:5.5px solid transparent;border-right:5.5px solid transparent;border-top:8px solid #666;"></div>
<svg class="a" style="left:164px;top:210px" width="17" height="17" viewBox="0 0 17 17"><path d="M1 1l15 15M16 1l-15 15" stroke="#c9c9c9" stroke-width="2.6"/></svg>
<svg class="a" style="left:210px;top:209px" width="22" height="18" viewBox="0 0 22 18"><path d="M1 10l6 6 14-15" fill="none" stroke="#c9c9c9" stroke-width="2.8"/></svg>
<span class="t" style="left:259.0px;top:201.0px;font-size:27px;line-height:32px;color:#333;font-family:'Liberation Serif',serif;font-style:italic;">f</span>
<span class="t" style="left:268.0px;top:206.5px;font-size:21px;line-height:25px;color:#333;font-family:'Liberation Serif',serif;font-style:italic;">x</span>
<div class="a" style="left:295px;top:206px;width:1px;height:24px;background:#dcdcdc;"></div>
<span class="t" style="left:308.0px;top:206.5px;font-size:19.5px;line-height:23px;color:#111;transform:scaleX(1.0725);">=Auxiliar!T3</span>
<div class="a" style="left:0px;top:244px;width:2048px;height:36px;background:linear-gradient(#fcfcfc 0%,#f8f8f8 80%,#ececec 100%);"></div>
<div class="a" style="left:0px;top:279.5px;width:2048px;height:1.3px;background:#c0c0c0;"></div>
<div class="a" style="left:72px;top:244px;width:413.5px;height:33px;background:linear-gradient(#ededed,#e5e5e5);"></div>
<div class="a" style="left:72px;top:277px;width:413.3px;height:3.7px;background:#1e7145;"></div>
<div class="a" style="left:11px;top:253px;border-left:23px solid transparent;border-bottom:23px solid #d9d9d9;"></div>
<div class="a" style="left:39px;top:247px;width:1px;height:32px;background:#e0e0e0;"></div>
<div class="a" style="left:59px;top:247px;width:1px;height:32px;background:#e0e0e0;"></div>
<div class="a" style="left:486px;top:247px;width:1px;height:32px;background:#e0e0e0;"></div>
<div class="a" style="left:509px;top:247px;width:1px;height:32px;background:#e0e0e0;"></div>
<div class="a" style="left:921px;top:247px;width:1px;height:32px;background:#e0e0e0;"></div>
<div class="a" style="left:945px;top:247px;width:1px;height:32px;background:#e0e0e0;"></div>
<div class="a" style="left:1357px;top:247px;width:1px;height:32px;background:#e0e0e0;"></div>
<div class="a" style="left:1381px;top:247px;width:1px;height:32px;background:#e0e0e0;"></div>
<div class="a" style="left:1793px;top:247px;width:1px;height:32px;background:#e0e0e0;"></div>
<div class="a" style="left:1901px;top:247px;width:1px;height:32px;background:#e0e0e0;"></div>
<div class="a" style="left:2010px;top:247px;width:1px;height:32px;background:#e0e0e0;"></div>
<span class="t" style="left:43.3px;top:252.0px;font-size:18.5px;line-height:22px;color:#3a3a3a;transform:scaleX(0.9300);">A</span>
<span class="t" style="left:60.3px;top:252.0px;font-size:18.5px;line-height:22px;color:#3a3a3a;transform:scaleX(0.9300);">B</span>
<span class="t" style="left:491.8px;top:252.0px;font-size:18.5px;line-height:22px;color:#3a3a3a;transform:scaleX(0.9300);">D</span>
<span class="t" style="left:708.3px;top:252.0px;font-size:18.5px;line-height:22px;color:#3a3a3a;transform:scaleX(0.9300);">E</span>
<span class="t" style="left:926.7px;top:252.0px;font-size:18.5px;line-height:22px;color:#3a3a3a;transform:scaleX(0.9300);">F</span>
<span class="t" style="left:1143.3px;top:252.0px;font-size:18.5px;line-height:22px;color:#3a3a3a;transform:scaleX(0.9300);">G</span>
<span class="t" style="left:1362.8px;top:252.0px;font-size:18.5px;line-height:22px;color:#3a3a3a;transform:scaleX(0.9300);">H</span>
<span class="t" style="left:1584.6px;top:252.0px;font-size:18.5px;line-height:22px;color:#3a3a3a;transform:scaleX(0.9300);">I</span>
<span class="t" style="left:1842.7px;top:252.0px;font-size:18.5px;line-height:22px;color:#3a3a3a;transform:scaleX(0.9300);">J</span>
<span class="t" style="left:1950.3px;top:252.0px;font-size:18.5px;line-height:22px;color:#3a3a3a;transform:scaleX(0.9300);">K</span>
<span class="t" style="left:273.5px;top:252.0px;font-size:18.5px;line-height:22px;color:#217346;font-weight:bold;transform:scaleX(0.8233);">C</span>
<div class="a" style="left:0px;top:280px;width:39px;height:834px;background:linear-gradient(90deg,#fdfdfd,#f6f6f6);"></div>
<div class="a" style="left:39px;top:280px;width:1px;height:834px;background:#cfcfcf;"></div>
<div class="a" style="left:0px;top:510.5px;width:39px;height:76px;background:linear-gradient(90deg,#f7f7f7,#e2e2e2);"></div>
<div class="a" style="left:37px;top:510px;width:3px;height:76px;background:#217346;"></div>
<div class="a" style="left:0px;top:342.5px;width:39px;height:1px;background:#dadada;"></div>
<div class="a" style="left:0px;top:400px;width:39px;height:1px;background:#dadada;"></div>
<div class="a" style="left:0px;top:456.5px;width:39px;height:1px;background:#dadada;"></div>
<div class="a" style="left:0px;top:465.5px;width:39px;height:1px;background:#dadada;"></div>
<div class="a" style="left:0px;top:510px;width:39px;height:1px;background:#dadada;"></div>
<div class="a" style="left:0px;top:586.5px;width:39px;height:1px;background:#dadada;"></div>
<div class="a" style="left:0px;top:622px;width:39px;height:1px;background:#dadada;"></div>
<div class="a" style="left:0px;top:671.3px;width:39px;height:1px;background:#dadada;"></div>
<div class="a" style="left:0px;top:937px;width:39px;height:1px;background:#dadada;"></div>
<div class="a" style="left:0px;top:963.5px;width:39px;height:1px;background:#dadada;"></div>
<div class="a" style="left:0px;top:990px;width:39px;height:1px;background:#dadada;"></div>
<div class="a" style="left:0px;top:1016.3px;width:39px;height:1px;background:#dadada;"></div>
<div class="a" style="left:0px;top:1042.6px;width:39px;height:1px;background:#dadada;"></div>
<div class="a" style="left:0px;top:1069px;width:39px;height:1px;background:#dadada;"></div>
<div class="a" style="left:0px;top:1095.3px;width:39px;height:1px;background:#dadada;"></div>
<span class="t" style="left:15.1px;top:319.5px;font-size:18.5px;line-height:22px;color:#3a3a3a;transform:scaleX(0.9500);">1</span>
<span class="t" style="left:15.1px;top:368.5px;font-size:18.5px;line-height:22px;color:#3a3a3a;transform:scaleX(0.9500);">2</span>
<span class="t" style="left:15.1px;top:434.5px;font-size:18.5px;line-height:22px;color:#3a3a3a;transform:scaleX(0.9500);">4</span>
<span class="t" style="left:15.1px;top:486.5px;font-size:18.5px;line-height:22px;color:#3a3a3a;transform:scaleX(0.9500);">6</span>
<span class="t" style="left:15.1px;top:598.0px;font-size:18.5px;line-height:22px;color:#3a3a3a;transform:scaleX(0.9500);">8</span>
<span class="t" style="left:15.1px;top:647.0px;font-size:18.5px;line-height:22px;color:#3a3a3a;transform:scaleX(0.9500);">9</span>
<span class="t" style="left:10.2px;top:913.0px;font-size:18.5px;line-height:22px;color:#3a3a3a;transform:scaleX(0.9500);">10</span>
<span class="t" style="left:10.9px;top:940.5px;font-size:18.5px;line-height:22px;color:#3a3a3a;transform:scaleX(0.9500);">11</span>
<span class="t" style="left:10.2px;top:967.0px;font-size:18.5px;line-height:22px;color:#3a3a3a;transform:scaleX(0.9500);">12</span>
<span class="t" style="left:10.2px;top:993.5px;font-size:18.5px;line-height:22px;color:#3a3a3a;transform:scaleX(0.9500);">13</span>
<span class="t" style="left:10.2px;top:1020.0px;font-size:18.5px;line-height:22px;color:#3a3a3a;transform:scaleX(0.9500);">14</span>
<span class="t" style="left:10.2px;top:1046.5px;font-size:18.5px;line-height:22px;color:#3a3a3a;transform:scaleX(0.9500);">15</span>
<span class="t" style="left:10.2px;top:1072.5px;font-size:18.5px;line-height:22px;color:#3a3a3a;transform:scaleX(0.9500);">16</span>
<span class="t" style="left:10.2px;top:1099.0px;font-size:18.5px;line-height:22px;color:#3a3a3a;transform:scaleX(0.9500);">17</span>
<span class="t" style="left:15.0px;top:549.0px;font-size:18.5px;line-height:22px;color:#217346;font-weight:bold;transform:scaleX(0.9719);">7</span>
<div class="a" style="left:40px;top:280.7px;width:2008px;height:62.3px;background:#404040;"></div>
<div class="a" style="left:40px;top:342.5px;width:2008px;height:50px;background:#699bcc;"></div>
<svg class="a" style="left:54px;top:296px" width="24" height="33" viewBox="0 0 24 33"><path d="M1.6 8.2v-1.2a5.6 5.6 0 0 1 5.6-5.6h9.6a5.6 5.6 0 0 1 5.6 5.6v3" fill="none" stroke="#fff" stroke-width="2.4"/><path d="M1.6 10.6v8.8a6 6 0 0 0 6 6h8.8a6 6 0 0 0 6-6v-9.4" fill="none" stroke="#fff" stroke-width="2.4"/><path d="M7.8 28.4h8.4M9.6 30.8h4.8" stroke="#fff" stroke-width="1.7" stroke-linecap="round"/></svg>
<span class="t" style="left:83.5px;top:299.8px;font-size:18px;line-height:22px;color:#fff;transform:scaleX(0.9410);-webkit-text-stroke:.35px #fff;">LUZ</span>
<div class="a" style="left:121.2px;top:301px;width:1.6px;height:19.3px;background:#cfcfcf;"></div>
<span class="t" style="left:128.5px;top:302.5px;font-size:7.8px;line-height:9px;color:#ececec;transform:scaleX(0.9636);">Planilhas</span>
<span class="t" style="left:128.5px;top:310.5px;font-size:7.8px;line-height:9px;color:#ececec;transform:scaleX(0.9777);">Empresariais</span>
<span class="t" style="left:256.0px;top:290.5px;font-size:17px;line-height:20px;color:#fff;transform:scaleX(0.8607);-webkit-text-stroke:.55px #fff;">PLANO DE</span>
<span class="t" style="left:262.5px;top:313.0px;font-size:17px;line-height:20px;color:#fff;transform:scaleX(0.8767);-webkit-text-stroke:.55px #fff;">CONTAS</span>
<span class="t" style="left:397.2px;top:301.0px;font-size:17px;line-height:20px;color:#fff;transform:scaleX(0.8869);-webkit-text-stroke:.55px #fff;">LANÇAMENTOS</span>
<span class="t" style="left:554.0px;top:290.5px;font-size:17px;line-height:20px;color:#fff;transform:scaleX(0.8596);-webkit-text-stroke:.55px #fff;">FLUXO DE CAIXA</span>
<span class="t" style="left:588.0px;top:313.0px;font-size:17px;line-height:20px;color:#fff;transform:scaleX(0.9050);-webkit-text-stroke:.55px #fff;">DIÁRIO</span>
<span class="t" style="left:730.0px;top:301.0px;font-size:17px;line-height:20px;color:#fff;transform:scaleX(0.8494);-webkit-text-stroke:.55px #fff;">RELATÓRIOS</span>
<div class="a" style="left:856px;top:280.7px;width:161px;height:62.3px;background:#699bcc;"></div>
<span class="t" style="left:883.5px;top:301.0px;font-size:17px;line-height:20px;color:#fff;font-weight:bold;transform:scaleX(0.8618);">DASHBOARDS</span>
<span class="t" style="left:1051.5px;top:301.0px;font-size:17px;line-height:20px;color:#fff;transform:scaleX(0.8434);-webkit-text-stroke:.55px #fff;">INSTRUÇÕES</span>
<div class="a" style="left:60.5px;top:348px;width:41px;height:40px;background:#fff;border-radius:4px;box-shadow:0 0 2px rgba(0,0,0,.25);"></div>
<svg class="a" style="left:68px;top:355px" width="26" height="26" viewBox="0 0 26 26"><circle cx="13" cy="13" r="11" fill="none" stroke="#e7252c" stroke-width="2.6"/><path d="M9.5 7l9 6-9 6z" fill="#e7252c"/></svg>
<div class="a" style="left:180.2px;top:354px;width:160.8px;height:38px;background:#fff;"></div>
<span class="t" style="left:195.2px;top:364.0px;font-size:17px;line-height:20px;color:#333;font-weight:bold;transform:scaleX(0.8636);">ANÁLISE MENSAL</span>
<span class="t" style="left:363.0px;top:364.5px;font-size:17px;line-height:20px;color:#fff;font-weight:bold;transform:scaleX(0.8719);">ANÁLISE ANUAL</span>
<span class="t" style="left:518.5px;top:364.5px;font-size:17px;line-height:20px;color:#fff;font-weight:bold;transform:scaleX(0.8642);">ANÁLISE DE CONTAS</span>
<span class="t" style="left:702.5px;top:364.5px;font-size:17px;line-height:20px;color:#fff;font-weight:bold;transform:scaleX(0.8421);">ANÁLISE DE RECEITAS</span>
<span class="t" style="left:893.0px;top:364.5px;font-size:17px;line-height:20px;color:#fff;font-weight:bold;transform:scaleX(0.8339);">ANÁLISE DE DESPESAS</span>
<div class="a" style="left:0px;top:391.9px;width:2048px;height:1.6px;background:#757575;"></div>
<span class="t" style="left:85.0px;top:420.0px;font-size:16.8px;line-height:20px;color:#111;transform:scaleX(1.1131);text-shadow:0 0 .5px #111;">Total</span>
<div class="a" style="left:259px;top:410.2px;width:36px;height:34px;background:#d6d6d6;border:1.5px solid #111;box-shadow:inset 1.5px 1.5px 0 #f4f4f4, inset -1.5px -1.5px 0 #9a9a9a;"></div>
<div class="a" style="left:266px;top:420.7px;border-left:11px solid transparent;border-right:11px solid transparent;border-top:11.5px solid #111;"></div>
<div class="a" style="left:72px;top:457.8px;width:1721px;height:1.3px;background:#c6c6c6;"></div>
<span class="t" style="left:77.5px;top:478.5px;font-size:18.6px;line-height:22px;color:#111;font-weight:bold;transform:scaleX(0.8887);">Receitas</span>
<span class="t" style="left:513.5px;top:478.5px;font-size:18.6px;line-height:22px;color:#111;font-weight:bold;transform:scaleX(0.8750);">Despesas</span>
<span class="t" style="left:949.5px;top:478.5px;font-size:18.6px;line-height:22px;color:#111;font-weight:bold;transform:scaleX(0.9139);">Lucro / Prejuízo</span>
<span class="t" style="left:1385.5px;top:478.5px;font-size:18.6px;line-height:22px;color:#111;font-weight:bold;transform:scaleX(0.9137);">Lucratividade</span>
<span class="t" style="left:77.5px;top:637.5px;font-size:18.6px;line-height:22px;color:#111;font-weight:bold;transform:scaleX(0.8989);">Comparação do Fluxo de Caixa</span>
<span class="t" style="left:513.5px;top:637.5px;font-size:18.6px;line-height:22px;color:#111;font-weight:bold;transform:scaleX(0.9176);">Saldo do Mês</span>
<span class="t" style="left:949.5px;top:637.5px;font-size:18.6px;line-height:22px;color:#111;font-weight:bold;transform:scaleX(0.8986);">Divisão de Receitas</span>
<span class="t" style="left:1385.5px;top:637.5px;font-size:18.6px;line-height:22px;color:#111;font-weight:bold;transform:scaleX(0.8916);">Divisão de Despesas</span>
<div class="a" style="left:72px;top:510px;width:413px;height:112.5px;background:#fff;border:1.5px solid #d2d2d2;"></div>
<div class="a" style="left:73.5px;top:586.5px;width:410px;height:34.5px;background:#ea4537;"></div>
<span class="t" style="left:172.5px;top:523.0px;font-size:46.8px;line-height:56px;color:#404040;font-weight:bold;transform:scaleX(0.9862);">R$ 41.500</span>
<span class="t" style="left:84.0px;top:593.0px;font-size:16.6px;line-height:20px;color:#fff;transform:scaleX(0.9707);">Realizado x Meta</span>
<span class="t" style="left:400.0px;top:591.0px;font-size:24.2px;line-height:29px;color:#fff;font-weight:bold;transform:scaleX(0.9491);">-9,8%</span>
<div class="a" style="left:509px;top:510px;width:413px;height:112.5px;background:#fff;border:1.5px solid #d2d2d2;"></div>
<div class="a" style="left:510.5px;top:586.5px;width:410px;height:34.5px;background:#57ab44;"></div>
<span class="t" style="left:609.5px;top:523.0px;font-size:46.8px;line-height:56px;color:#404040;font-weight:bold;transform:scaleX(0.9862);">R$ 37.000</span>
<span class="t" style="left:521.0px;top:593.0px;font-size:16.6px;line-height:20px;color:#fff;transform:scaleX(0.9707);">Realizado x Meta</span>
<span class="t" style="left:832.0px;top:591.0px;font-size:24.2px;line-height:29px;color:#fff;font-weight:bold;transform:scaleX(0.9327);">14,9%</span>
<div class="a" style="left:945px;top:510px;width:413px;height:112.5px;background:#fff;border:1.5px solid #d2d2d2;"></div>
<div class="a" style="left:946.5px;top:586.5px;width:410px;height:34.5px;background:#57ab44;"></div>
<span class="t" style="left:1059.0px;top:523.0px;font-size:46.8px;line-height:56px;color:#404040;font-weight:bold;transform:scaleX(0.9792);">R$ 4.500</span>
<span class="t" style="left:957.0px;top:593.0px;font-size:16.6px;line-height:20px;color:#fff;transform:scaleX(0.9707);">Realizado x Meta</span>
<span class="t" style="left:1268.0px;top:591.0px;font-size:24.2px;line-height:29px;color:#fff;font-weight:bold;transform:scaleX(0.9473);">80,0%</span>
<div class="a" style="left:1381px;top:510px;width:413px;height:112.5px;background:#fff;border:1.5px solid #d2d2d2;"></div>
<div class="a" style="left:1382.5px;top:586.5px;width:410px;height:34.5px;background:#ea4537;"></div>
<span class="t" style="left:1543.5px;top:523.0px;font-size:46.8px;line-height:56px;color:#404040;font-weight:bold;transform:scaleX(0.9502);">10%</span>
<span class="t" style="left:1393.0px;top:593.0px;font-size:16.6px;line-height:20px;color:#fff;transform:scaleX(0.9707);">Realizado x Meta</span>
<span class="t" style="left:1695.0px;top:591.0px;font-size:24.2px;line-height:29px;color:#fff;font-weight:bold;transform:scaleX(0.9651);">-88,0%</span>
<div class="a" style="left:70.2px;top:508.2px;width:416.6px;height:79.6px;border:3px solid #1e7145;"></div>
<div class="a" style="left:481.5px;top:581.5px;width:8px;height:8px;background:#1e7145;border:1.5px solid #fff;"></div>
<div class="a" style="left:72px;top:671px;width:413px;height:266.5px;background:#fff;border:1.5px solid #d4d4d4;"></div>
<div class="a" style="left:508.5px;top:671px;width:414px;height:266.5px;background:#fff;border:1.5px solid #d4d4d4;"></div>
<div class="a" style="left:944.5px;top:671px;width:418px;height:270px;background:#fff;border:1.5px solid #d4d4d4;"></div>
<div class="a" style="left:1380.5px;top:671px;width:418px;height:270px;background:#fff;border:1.5px solid #d4d4d4;"></div>
<div class="a" style="left:108px;top:723px;width:79px;height:148px;background:#57ab44;"></div>
<div class="a" style="left:195px;top:707px;width:79px;height:164px;background:#a0d58f;"></div>
<div class="a" style="left:282px;top:738px;width:79px;height:133px;background:#ea4537;"></div>
<div class="a" style="left:367.5px;top:715px;width:79px;height:156px;background:#f18277;"></div>
<div class="a" style="left:92px;top:871px;width:371px;height:1.5px;background:#d0d0d0;"></div>
<span class="t" style="left:118.0px;top:698.0px;font-size:13.2px;line-height:16px;color:#404040;transform:scaleX(0.9850);">R$ 41.500</span>
<span class="t" style="left:204.5px;top:682.0px;font-size:13.2px;line-height:16px;color:#404040;transform:scaleX(0.9850);">R$ 46.000</span>
<span class="t" style="left:291.0px;top:714.0px;font-size:13.2px;line-height:16px;color:#404040;transform:scaleX(0.9850);">R$ 37.000</span>
<span class="t" style="left:377.5px;top:691.0px;font-size:13.2px;line-height:16px;color:#404040;transform:scaleX(0.9850);">R$ 43.500</span>
<div class="a" style="left:133px;top:909px;width:8px;height:8px;background:#57ab44;"></div>
<span class="t" style="left:145.0px;top:905.5px;font-size:13.2px;line-height:16px;color:#595959;transform:scaleX(0.9736);">Receitas</span>
<div class="a" style="left:226px;top:909px;width:8px;height:8px;background:#a0d58f;"></div>
<span class="t" style="left:238.0px;top:905.5px;font-size:13.2px;line-height:16px;color:#595959;transform:scaleX(1.0734);">Meta</span>
<div class="a" style="left:300px;top:909px;width:8px;height:8px;background:#ea4537;"></div>
<span class="t" style="left:312.0px;top:905.5px;font-size:13.2px;line-height:16px;color:#595959;transform:scaleX(0.9540);">Despesas</span>
<div class="a" style="left:400px;top:909px;width:8px;height:8px;background:#f18277;"></div>
<span class="t" style="left:412.0px;top:905.5px;font-size:13.2px;line-height:16px;color:#595959;transform:scaleX(1.0734);">Meta</span>
<div class="a" style="left:571px;top:710px;width:137.5px;height:161px;background:#5670cb;"></div>
<div class="a" style="left:721.5px;top:782px;width:137.5px;height:89px;background:#b5c7e7;"></div>
<div class="a" style="left:530px;top:871px;width:370px;height:1.5px;background:#d0d0d0;"></div>
<span class="t" style="left:613.2px;top:685.0px;font-size:13.2px;line-height:16px;color:#404040;transform:scaleX(0.9800);">R$ 4.500</span>
<span class="t" style="left:763.8px;top:757.0px;font-size:13.2px;line-height:16px;color:#404040;transform:scaleX(0.9800);">R$ 2.500</span>
<div class="a" style="left:574px;top:905px;width:8px;height:8px;background:#5670cb;"></div>
<span class="t" style="left:585.5px;top:901.5px;font-size:13.2px;line-height:16px;color:#595959;transform:scaleX(1.0168);">Lucro / Prejuízo</span>
<div class="a" style="left:704px;top:905px;width:8px;height:8px;background:#b5c7e7;"></div>
<span class="t" style="left:714.5px;top:901.5px;font-size:13.2px;line-height:16px;color:#595959;transform:scaleX(1.0222);">Meta de Lucro / Prejuízo</span>
<svg class="a" style="left:0;top:0" width="2048" height="1189"><path d="M1084.90 691.05A118.75 118.75 0 0 1 1172.94 889.49L1124.30 845.47A53.15 53.15 0 0 0 1084.90 756.65Z" fill="#57ab44" stroke="#fff" stroke-width="3.5" stroke-linejoin="miter"/><path d="M1172.94 889.49A118.75 118.75 0 1 1 1052.37 695.59L1070.34 758.68A53.15 53.15 0 1 0 1124.30 845.47Z" fill="#fdbe2d" stroke="#fff" stroke-width="3.5" stroke-linejoin="miter"/><path d="M1052.37 695.59A118.75 118.75 0 0 1 1084.90 691.05L1084.90 756.65A53.15 53.15 0 0 0 1070.34 758.68Z" fill="#a5a5a5" stroke="#fff" stroke-width="3.5" stroke-linejoin="miter"/><path d="M1521.00 690.95A118.75 118.75 0 0 1 1585.68 710.11L1549.95 765.12A53.15 53.15 0 0 0 1521.00 756.55Z" fill="#ea4537" stroke="#fff" stroke-width="3.5" stroke-linejoin="miter"/><path d="M1585.68 710.11A118.75 118.75 0 0 1 1633.84 772.71L1571.51 793.14A53.15 53.15 0 0 0 1549.95 765.12Z" fill="#1aaf54" stroke="#fff" stroke-width="3.5" stroke-linejoin="miter"/><path d="M1633.84 772.71A118.75 118.75 0 0 1 1637.41 786.23L1573.10 799.19A53.15 53.15 0 0 0 1571.51 793.14Z" fill="#a5a5a5" stroke="#fff" stroke-width="3.5" stroke-linejoin="miter"/><path d="M1637.41 786.23A118.75 118.75 0 0 1 1448.71 903.91L1488.64 851.87A53.15 53.15 0 0 0 1573.10 799.19Z" fill="#fdbe2d" stroke="#fff" stroke-width="3.5" stroke-linejoin="miter"/><path d="M1448.71 903.91A118.75 118.75 0 0 1 1432.20 730.86L1481.25 774.41A53.15 53.15 0 0 0 1488.64 851.87Z" fill="#5b9bd5" stroke="#fff" stroke-width="3.5" stroke-linejoin="miter"/><path d="M1432.20 730.86A118.75 118.75 0 0 1 1510.65 691.40L1516.37 756.75A53.15 53.15 0 0 0 1481.25 774.41Z" fill="#70ad47" stroke="#fff" stroke-width="3.5" stroke-linejoin="miter"/><path d="M1510.65 691.40A118.75 118.75 0 0 1 1521.00 690.95L1521.00 756.55A53.15 53.15 0 0 0 1516.37 756.75Z" fill="#264478" stroke="#fff" stroke-width="3.5" stroke-linejoin="miter"/></svg>
<span class="t" style="left:1149.5px;top:766.5px;font-size:14.2px;line-height:17px;color:#fff;font-family:'Liberation Serif',serif;">37%</span>
<span class="t" style="left:998.5px;top:846.5px;font-size:14.2px;line-height:17px;color:#fff;font-family:'Liberation Serif',serif;">59%</span>
<span class="t" style="left:1063.5px;top:716.5px;font-size:14.2px;line-height:17px;color:#fff;font-family:'Liberation Serif',serif;">4%</span>
<span class="t" style="left:1535.5px;top:719.0px;font-size:14.2px;line-height:17px;color:#fff;font-family:'Liberation Serif',serif;">9%</span>
<span class="t" style="left:1576.2px;top:749.0px;font-size:14.2px;line-height:17px;color:#fff;font-family:'Liberation Serif',serif;">11%</span>
<span class="t" style="left:1552.5px;top:875.0px;font-size:14.2px;line-height:17px;color:#fff;font-family:'Liberation Serif',serif;">39%</span>
<span class="t" style="left:1422.0px;top:809.0px;font-size:14.2px;line-height:17px;color:#fff;font-family:'Liberation Serif',serif;">26%</span>
<span class="t" style="left:1470.0px;top:725.0px;font-size:14.2px;line-height:17px;color:#fff;font-family:'Liberation Serif',serif;">12%</span>
<span class="t" style="left:1508.0px;top:716.0px;font-size:14.2px;line-height:17px;color:#fff;font-family:'Liberation Serif',serif;">1%</span>
<span class="t" style="left:1512.0px;top:716.0px;font-size:14.2px;line-height:17px;color:#fff;font-family:'Liberation Serif',serif;">0%</span>
<div class="a" style="left:1590px;top:779px;width:30px;height:11px;overflow:hidden;"><span class="t" style="left:4px;top:0px;font-size:14.5px;line-height:17px;color:#fff;font-family:'Liberation Serif',serif;">2%</span></div>
<div class="a" style="left:1238.3px;top:744px;width:5.6px;height:5.4px;background:#57ab44;"></div>
<span class="t" style="left:1248.5px;top:741.0px;font-size:13.2px;line-height:16px;color:#595959;transform:scaleX(0.9170);">RECEITA COM</span>
<span class="t" style="left:1248.5px;top:759.0px;font-size:13.2px;line-height:16px;color:#595959;transform:scaleX(0.8985);">PRODUTOS</span>
<div class="a" style="left:1238.3px;top:792.5px;width:5.6px;height:5.4px;background:#fdbe2d;"></div>
<span class="t" style="left:1248.5px;top:789.5px;font-size:13.2px;line-height:16px;color:#595959;transform:scaleX(0.9170);">RECEITA COM</span>
<span class="t" style="left:1248.5px;top:807.5px;font-size:13.2px;line-height:16px;color:#595959;transform:scaleX(0.8532);">SERVIÇOS</span>
<div class="a" style="left:1238.3px;top:841.5px;width:5.6px;height:5.4px;background:#a5a5a5;"></div>
<span class="t" style="left:1248.5px;top:838.5px;font-size:13.2px;line-height:16px;color:#595959;transform:scaleX(0.8941);">RECEITAS NÃO</span>
<span class="t" style="left:1248.5px;top:856.5px;font-size:13.2px;line-height:16px;color:#595959;transform:scaleX(0.9006);">OPERACIONAIS</span>
<div class="a" style="left:1662.8px;top:683px;width:5.6px;height:5.4px;background:#ea4537;"></div>
<span class="t" style="left:1672.5px;top:680.0px;font-size:13.2px;line-height:16px;color:#595959;transform:scaleX(0.8950);">DESPESA COM</span>
<span class="t" style="left:1672.5px;top:698.0px;font-size:13.2px;line-height:16px;color:#595959;transform:scaleX(0.8985);">PRODUTOS</span>
<div class="a" style="left:1662.8px;top:714.5px;width:5.6px;height:5.4px;background:#1aaf54;"></div>
<span class="t" style="left:1672.5px;top:711.5px;font-size:13.2px;line-height:16px;color:#595959;transform:scaleX(0.8950);">DESPESA COM</span>
<span class="t" style="left:1672.5px;top:729.5px;font-size:13.2px;line-height:16px;color:#595959;transform:scaleX(0.8532);">SERVIÇOS</span>
<div class="a" style="left:1662.8px;top:746.5px;width:5.6px;height:5.4px;background:#a5a5a5;"></div>
<span class="t" style="left:1672.5px;top:743.5px;font-size:13.2px;line-height:16px;color:#595959;transform:scaleX(0.8892);">DESPESA NÃO</span>
<span class="t" style="left:1672.5px;top:761.5px;font-size:13.2px;line-height:16px;color:#595959;transform:scaleX(0.9006);">OPERACIONAIS</span>
<div class="a" style="left:1662.8px;top:778.5px;width:5.6px;height:5.4px;background:#fdbe2d;"></div>
<span class="t" style="left:1672.5px;top:775.5px;font-size:13.2px;line-height:16px;color:#595959;transform:scaleX(0.8950);">DESPESA COM</span>
<span class="t" style="left:1672.5px;top:793.5px;font-size:13.2px;line-height:16px;color:#595959;transform:scaleX(0.8654);">RH</span>
<div class="a" style="left:1662.8px;top:810.5px;width:5.6px;height:5.4px;background:#5b9bd5;"></div>
<span class="t" style="left:1672.5px;top:807.5px;font-size:13.2px;line-height:16px;color:#595959;transform:scaleX(0.8361);">DESPESAS</span>
<span class="t" style="left:1672.5px;top:825.5px;font-size:13.2px;line-height:16px;color:#595959;transform:scaleX(0.9006);">OPERACIONAIS</span>
<div class="a" style="left:1662.8px;top:842px;width:5.6px;height:5.4px;background:#70ad47;"></div>
<span class="t" style="left:1672.5px;top:839.0px;font-size:13.2px;line-height:16px;color:#595959;transform:scaleX(0.8757);">DESPESAS COM</span>
<span class="t" style="left:1672.5px;top:857.0px;font-size:13.2px;line-height:16px;color:#595959;transform:scaleX(0.9303);">MARKETING</span>
<div class="a" style="left:1662.8px;top:873.5px;width:5.6px;height:5.4px;background:#264478;"></div>
<span class="t" style="left:1672.5px;top:870.5px;font-size:13.2px;line-height:16px;color:#595959;transform:scaleX(0.9217);">IMPOSTOS</span>
<div class="a" style="left:1662.8px;top:905.5px;width:5.6px;height:5.4px;background:#595959;"></div>
<span class="t" style="left:1672.5px;top:902.5px;font-size:13.2px;line-height:16px;color:#595959;transform:scaleX(0.9203);">INVESTIMENTOS</span>
<div class="a" style="left:0px;top:1113.5px;width:2048px;height:42.5px;background:linear-gradient(#f4f4f4,#ececec);border-top:1.5px solid #c6c6c6;"></div>
<div class="a" style="left:0px;top:1155.8px;width:2048px;height:2.2px;background:#b6b6b6;"></div>
<div class="a" style="left:24px;top:1127.6px;border-top:8.5px solid transparent;border-bottom:8.5px solid transparent;border-right:13px solid #6a6a6a;"></div>
<div class="a" style="left:62px;top:1127.6px;border-top:8.5px solid transparent;border-bottom:8.5px solid transparent;border-left:13px solid #8e8e8e;"></div>
<div class="a" style="left:99px;top:1116px;width:1px;height:32px;background:#cfcfcf;"></div>
<div class="a" style="left:242px;top:1116px;width:1px;height:32px;background:#cfcfcf;"></div>
<div class="a" style="left:647px;top:1116px;width:1px;height:32px;background:#cfcfcf;"></div>
<div class="a" style="left:789px;top:1116px;width:1px;height:32px;background:#cfcfcf;"></div>
<div class="a" style="left:932px;top:1116px;width:1px;height:32px;background:#cfcfcf;"></div>
<div class="a" style="left:1075px;top:1116px;width:1px;height:32px;background:#cfcfcf;"></div>
<div class="a" style="left:1217px;top:1116px;width:1px;height:32px;background:#cfcfcf;"></div>
<div class="a" style="left:1360px;top:1116px;width:1px;height:32px;background:#cfcfcf;"></div>
<div class="a" style="left:1503px;top:1116px;width:1px;height:32px;background:#cfcfcf;"></div>
<div class="a" style="left:1645px;top:1116px;width:1px;height:32px;background:#cfcfcf;"></div>
<div class="a" style="left:1708px;top:1116px;width:1px;height:32px;background:#cfcfcf;"></div>
<div class="a" style="left:361.8px;top:1113px;width:141.8px;height:37.5px;background:#fff;border:1px solid #c2c2c2;border-top:none;border-radius:0 0 5px 5px;box-shadow:0 1px 1.5px rgba(0,0,0,.22);"></div>
<span class="t" style="left:149.0px;top:1122.8px;font-size:18.8px;line-height:23px;color:#565656;-webkit-text-stroke:.35px #565656;">REL_RI</span>
<svg class="a" style="left:126px;top:1124px" width="15" height="19" viewBox="0 0 15 19"><path d="M3.5 9v-3.5a4 4 0 0 1 8 0v3.5" fill="none" stroke="#c9c9c9" stroke-width="2.4"/><rect x="0.5" y="8.5" width="14" height="10" rx="1.8" fill="#c9c9c9"/></svg>
<span class="t" style="left:268.0px;top:1122.8px;font-size:18.8px;line-height:23px;color:#565656;transform:scaleX(1.0869);-webkit-text-stroke:.35px #565656;">Auxiliar</span>
<span class="t" style="left:411.0px;top:1122.8px;font-size:18.8px;line-height:23px;color:#1e7e45;font-weight:bold;transform:scaleX(1.0278);">DASH1</span>
<svg class="a" style="left:387.5px;top:1124px" width="15" height="19" viewBox="0 0 15 19"><path d="M3.5 9v-3.5a4 4 0 0 1 8 0v3.5" fill="none" stroke="#555" stroke-width="2.4"/><rect x="0.5" y="8.5" width="14" height="10" rx="1.8" fill="#555"/></svg>
<span class="t" style="left:554.5px;top:1122.8px;font-size:18.8px;line-height:23px;color:#565656;transform:scaleX(1.0369);-webkit-text-stroke:.35px #565656;">DASH2</span>
<svg class="a" style="left:530.5px;top:1124px" width="15" height="19" viewBox="0 0 15 19"><path d="M3.5 9v-3.5a4 4 0 0 1 8 0v3.5" fill="none" stroke="#555" stroke-width="2.4"/><rect x="0.5" y="8.5" width="14" height="10" rx="1.8" fill="#555"/></svg>
<span class="t" style="left:697.0px;top:1122.8px;font-size:18.8px;line-height:23px;color:#565656;transform:scaleX(1.0369);-webkit-text-stroke:.35px #565656;">DASH3</span>
<svg class="a" style="left:673px;top:1124px" width="15" height="19" viewBox="0 0 15 19"><path d="M3.5 9v-3.5a4 4 0 0 1 8 0v3.5" fill="none" stroke="#555" stroke-width="2.4"/><rect x="0.5" y="8.5" width="14" height="10" rx="1.8" fill="#555"/></svg>
<span class="t" style="left:840.0px;top:1122.8px;font-size:18.8px;line-height:23px;color:#565656;transform:scaleX(1.0369);-webkit-text-stroke:.35px #565656;">DASH4</span>
<svg class="a" style="left:816px;top:1124px" width="15" height="19" viewBox="0 0 15 19"><path d="M3.5 9v-3.5a4 4 0 0 1 8 0v3.5" fill="none" stroke="#555" stroke-width="2.4"/><rect x="0.5" y="8.5" width="14" height="10" rx="1.8" fill="#555"/></svg>
<span class="t" style="left:982.5px;top:1122.8px;font-size:18.8px;line-height:23px;color:#565656;transform:scaleX(1.0369);-webkit-text-stroke:.35px #565656;">DASH5</span>
<svg class="a" style="left:958.5px;top:1124px" width="15" height="19" viewBox="0 0 15 19"><path d="M3.5 9v-3.5a4 4 0 0 1 8 0v3.5" fill="none" stroke="#555" stroke-width="2.4"/><rect x="0.5" y="8.5" width="14" height="10" rx="1.8" fill="#555"/></svg>
<span class="t" style="left:1145.5px;top:1122.8px;font-size:18.8px;line-height:23px;color:#565656;transform:scaleX(1.0198);-webkit-text-stroke:.35px #565656;">INI</span>
<svg class="a" style="left:1121.5px;top:1124px" width="15" height="19" viewBox="0 0 15 19"><path d="M3.5 9v-3.5a4 4 0 0 1 8 0v3.5" fill="none" stroke="#555" stroke-width="2.4"/><rect x="0.5" y="8.5" width="14" height="10" rx="1.8" fill="#555"/></svg>
<span class="t" style="left:1280.5px;top:1122.8px;font-size:18.8px;line-height:23px;color:#565656;transform:scaleX(1.0077);-webkit-text-stroke:.35px #565656;">DUV</span>
<svg class="a" style="left:1256.5px;top:1124px" width="15" height="19" viewBox="0 0 15 19"><path d="M3.5 9v-3.5a4 4 0 0 1 8 0v3.5" fill="none" stroke="#555" stroke-width="2.4"/><rect x="0.5" y="8.5" width="14" height="10" rx="1.8" fill="#555"/></svg>
<span class="t" style="left:1422.0px;top:1122.8px;font-size:18.8px;line-height:23px;color:#565656;transform:scaleX(1.0309);-webkit-text-stroke:.35px #565656;">SUG</span>
<svg class="a" style="left:1398.5px;top:1124px" width="15" height="19" viewBox="0 0 15 19"><path d="M3.5 9v-3.5a4 4 0 0 1 8 0v3.5" fill="none" stroke="#555" stroke-width="2.4"/><rect x="0.5" y="8.5" width="14" height="10" rx="1.8" fill="#555"/></svg>
<span class="t" style="left:1567.0px;top:1122.8px;font-size:18.8px;line-height:23px;color:#565656;transform:scaleX(1.0558);-webkit-text-stroke:.35px #565656;">LUZ</span>
<svg class="a" style="left:1543px;top:1124px" width="15" height="19" viewBox="0 0 15 19"><path d="M3.5 9v-3.5a4 4 0 0 1 8 0v3.5" fill="none" stroke="#555" stroke-width="2.4"/><rect x="0.5" y="8.5" width="14" height="10" rx="1.8" fill="#555"/></svg>
<div class="a" style="left:1669px;top:1132.6px;width:17px;height:3.2px;background:#444;"></div>
<div class="a" style="left:1675.9px;top:1125.7px;width:3.2px;height:17px;background:#444;"></div>
<div class="a" style="left:0px;top:1158px;width:2048px;height:31px;background:linear-gradient(#e9e9e9,#dadada);"></div>
<span class="t" style="left:40.5px;top:1165.3px;font-size:18.6px;line-height:22px;color:#444;transform:scaleX(1.0857);-webkit-text-stroke:.3px #444;">Pronto</span>
<svg class="a" style="left:134px;top:1162px" width="26" height="25" viewBox="0 0 26 25"><circle cx="4.6" cy="5.2" r="4.2" fill="#555"/><path d="M5.6 9v10" stroke="#555" stroke-width="1.6"/><path d="M1.6 21h15.5a3 3 0 0 0 3-3v-14.2" fill="none" stroke="#555" stroke-width="2.6" stroke-linecap="round"/><path d="M9.5 3.7h13.8v2.3" fill="none" stroke="#555" stroke-width="2.4" stroke-linejoin="round"/></svg>
<div class="a" style="left:1632px;top:1158px;width:60px;height:31px;background:#b1b1b1;"></div>
<svg class="a" style="left:1651px;top:1165px" width="22" height="21" viewBox="0 0 22 21"><rect x="1" y="1" width="20" height="19" fill="none" stroke="#fff" stroke-width="1.8"/><path d="M1 7.3h20M1 13.6h20M7.6 1v19M14.3 1v19" stroke="#fff" stroke-width="1.6"/></svg>
<svg class="a" style="left:1709px;top:1164px" width="24" height="23" viewBox="0 0 24 23"><rect x="1" y="1" width="22" height="21" fill="none" stroke="#555" stroke-width="1.8"/><rect x="5.5" y="5" width="13" height="13.5" fill="none" stroke="#555" stroke-width="1.4"/><path d="M8 9h8M8 12h8M8 15h8" stroke="#555" stroke-width="1.2"/></svg>
<div class="a" style="left:1762px;top:1173.2px;width:14px;height:3px;background:#555;"></div>
<div class="a" style="left:1788px;top:1171px;width:162px;height:7px;background:#a6a6a6;border-radius:3.5px;"></div>
<div class="a" style="left:1860px;top:1165.5px;width:18px;height:18px;background:#fff;border-radius:50%;box-shadow:0 0 1.5px rgba(0,0,0,.55);"></div>
<div class="a" style="left:1962px;top:1173.2px;width:14px;height:3px;background:#555;"></div>
<div class="a" style="left:1967.5px;top:1167.7px;width:3px;height:14px;background:#555;"></div>
<span class="t" style="left:2003.0px;top:1165.3px;font-size:18.6px;line-height:22px;color:#444;transform:scaleX(1.0808);-webkit-text-stroke:.3px #444;">100 %</span>

</body></html>
